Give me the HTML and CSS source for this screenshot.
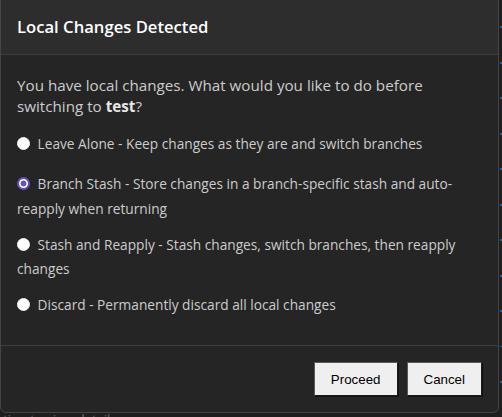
FILE: index.html
```html
<!DOCTYPE html>
<html lang="en">
<head>
<meta charset="utf-8">
<title>Local Changes Detected</title>
<link rel="stylesheet" href="styles.css">
</head>
<body>
<div class="backdrop">
  <div class="marks"></div>
  <div class="hint">ction to view details</div>
</div>
<div class="dialog" role="dialog" aria-labelledby="dlg-title">
  <div class="dialog-header">
    <h2 id="dlg-title" class="dialog-title">Local Changes Detected</h2>
  </div>
  <div class="dialog-body">
    <p class="prompt">You have local changes. What would you like to do before switching to <strong>test</strong>?</p>
    <label class="option"><input type="radio" name="action" class="radio"> Leave Alone - Keep changes as they are and switch branches</label>
    <label class="option"><input type="radio" name="action" class="radio" checked> Branch Stash - Store changes in a branch-specific stash and auto-reapply when returning</label>
    <label class="option"><input type="radio" name="action" class="radio"> Stash and Reapply - Stash changes, switch branches, then reapply changes</label>
    <label class="option"><input type="radio" name="action" class="radio"> Discard - Permanently discard all local changes</label>
  </div>
  <div class="dialog-footer">
    <button class="btn">Proceed</button>
    <button class="btn">Cancel</button>
  </div>
</div>
</body>
</html>
```
FILE: styles.css
```css
html, body {
  margin: 0;
  padding: 0;
}
body {
  width: 502px;
  height: 417px;
  overflow: hidden;
  background: #1e1e1e;
  position: relative;
  font-family: "Open Sans", "Noto Sans", sans-serif;
}
.backdrop {
  position: absolute;
  inset: 0;
}
.marks {
  position: absolute;
  right: 0;
  top: 0;
  width: 2px;
  height: 100%;
  background: repeating-linear-gradient(to bottom, transparent 0, transparent 26px, #1f5f9f 26px, #1f5f9f 28px, transparent 28px, transparent 35.5px);
}
.hint {
  position: absolute;
  left: -3px;
  top: 410px;
  font-size: 13px;
  color: #6a6a6a;
  white-space: nowrap;
}
.dialog {
  position: absolute;
  left: 0;
  top: -6px;
  width: 499px;
  height: 419px;
  box-sizing: border-box;
  border: 1px solid #454545;
  border-radius: 6px;
  background: #252525;
  display: flex;
  flex-direction: column;
  overflow: hidden;
}
.dialog-header {
  background: #2d2d2d;
  border-bottom: 1px solid #3e3e3e;
  height: 60px;
  box-sizing: border-box;
  padding: 20px 16px 0;
  flex: none;
}
.dialog-title {
  margin: 0;
  font-size: 16.65px;
  font-weight: 600;
  color: #ffffff;
  line-height: 24px;
}
.dialog-body {
  flex: 1;
  padding: 20px 16px 0;
  color: #cccccc;
}
.prompt {
  margin: 0 0 15px;
  font-size: 15.2px;
  line-height: 21px;
}
.prompt strong {
  color: #e6e6e6;
  font-weight: 700;
}
.option {
  display: block;
  font-size: 13.7px;
  line-height: 24.5px;
  margin-bottom: 11.5px;
}
.option:first-of-type {
  margin-bottom: 15.5px;
}
.radio {
  appearance: none;
  -webkit-appearance: none;
  width: 13px;
  height: 13px;
  margin: 0 4px 0 0;
  border-radius: 50%;
  background: #ffffff;
  border: 1px solid #f2f2f2;
  box-sizing: border-box;
  vertical-align: -1px;
}
.radio:checked {
  border: 2px solid #6650b4;
  background: radial-gradient(circle, #6650b4 0, #6650b4 2.6px, #ffffff 3.3px);
}
.dialog-footer {
  flex: none;
  border-top: 1px solid #3e3e3e;
  padding: 16px;
  display: flex;
  justify-content: flex-end;
  gap: 9px;
}
.btn {
  font-family: "Liberation Sans", Arial, sans-serif;
  font-size: 13.333px;
  color: #000000;
  background: #efefef;
  border: 1px solid #1a1a1a;
  border-top-color: #5a5a5a;
  border-left-color: #5a5a5a;
  height: 34px;
  padding: 0 16px;
  box-shadow: 1px 1px 0 #111111;
}
```
